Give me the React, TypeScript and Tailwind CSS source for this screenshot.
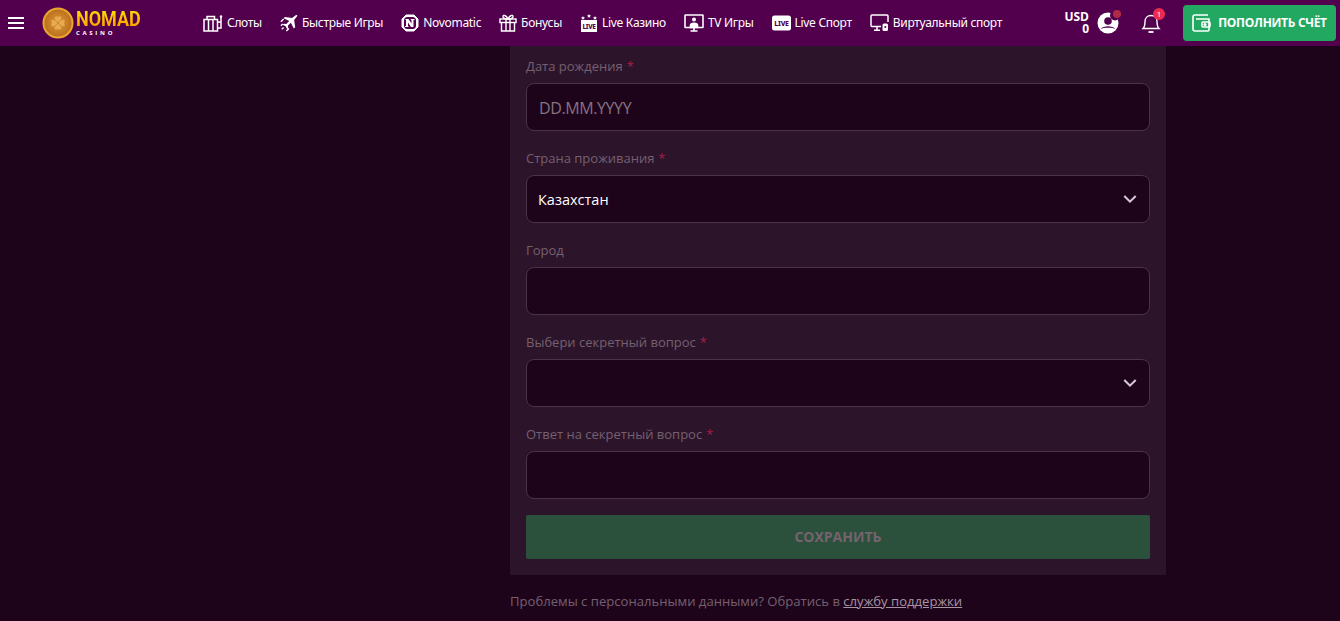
import { ReactNode } from "react";

function SlotsIcon() {
  return (
    <svg viewBox="0 0 20 18" className="h-[18px] w-5" fill="none" stroke="white" strokeWidth="1.5">
      <rect x="1" y="5.5" width="13.5" height="11.5" />
      <path d="M4 5.5V2.5h7.5v3M5.5 5.5V17M10 5.5V17M14.5 8H18v6h-3.5M18 8V3" />
      <circle cx="18" cy="2.5" r="1.2" fill="white" stroke="none" />
    </svg>
  );
}

function PlaneIcon() {
  return (
    <svg viewBox="0 0 20 20" className="h-[18px] w-[18px]" fill="white">
      <path d="M17.8 1.2c1-.6 1.8.2 1.2 1.2l-3.3 4.2 1.2 8-1.6 1.4-3.2-6.4-3.2 3.3.2 2.8-1.2 1.2-1.7-3.2-3.2-1.7 1.2-1.2 2.8.2 3.3-3.2L4 4.8l1.4-1.6 8 1.2z" />
      <path d="M1 8.5l3-3M1 13l2-2M7 19l3-3M2 17l2-2" stroke="white" strokeWidth="1.5" />
    </svg>
  );
}

function NovomaticIcon() {
  return (
    <svg viewBox="0 0 18 18" className="h-[18px] w-[18px]">
      <path d="M5 1h8l4 4v8l-4 4H5l-4-4V5z" fill="white" stroke="white" strokeLinejoin="round" strokeWidth="1" />
      <rect x="3" y="3" width="12" height="12" rx="3.5" fill="#52004e" />
      <path d="M4.5 5h3l3 4.500V6.500L9.500 5h4v1h-1v7H10L7 8.500V12l1 1H4v-1h1V6h-.5z" fill="white" />
    </svg>
  );
}

function GiftIcon() {
  return (
    <svg viewBox="0 0 18 18" className="h-[18px] w-[18px]" fill="none" stroke="white" strokeWidth="1.4">
      <rect x="1" y="5" width="16" height="3.5" />
      <path d="M2.500 8.500V17h13V8.500M7 5v12M11 5v12M9 5C7 1 4 .5 4 2.500S7 5 9 5c2 0 5-.5 5-2.500S11 1 9 5z" />
    </svg>
  );
}

function LiveCasinoIcon() {
  return (
    <svg viewBox="0 0 18 18" className="h-[18px] w-[18px]">
      <path d="M3 2l.6 1.300 1.400.1-1 1 .3 1.400L3 5.100l-1.300.7.3-1.400-1-1 1.400-.1zM9 0l.6 1.300 1.400.1-1 1 .3 1.400L9 3.100l-1.300.7.3-1.400-1-1 1.400-.1zM15 2l.6 1.300 1.400.1-1 1 .3 1.400-1.300-.7-1.300.7.3-1.400-1-1 1.400-.1z" fill="white" />
      <rect x="1" y="6" width="16" height="12" fill="white" />
      <text x="9" y="14.8" textAnchor="middle" fontSize="6.5" fontWeight="800" fill="#52004e">LIVE</text>
    </svg>
  );
}

function TvIcon() {
  return (
    <svg viewBox="0 0 20 18" className="h-[18px] w-5" fill="none" stroke="white" strokeWidth="1.6">
      <rect x="1" y="1" width="18" height="12.5" rx="0.5" />
      <circle cx="10" cy="5.5" r="2" fill="white" stroke="none" />
      <path d="M6.500 11.500c0-3 7-3 7 0v2h-7zM10 13.500V17M6.500 17h7" fill="white" />
    </svg>
  );
}

function LiveIcon() {
  return (
    <svg viewBox="0 0 19 16" className="h-4 w-[19px]">
      <rect x="0" y="0.5" width="19" height="15" rx="2.5" fill="white" />
      <text x="9.5" y="11" textAnchor="middle" fontSize="7" fontWeight="800" fill="#52004e">LIVE</text>
    </svg>
  );
}

function VirtualIcon() {
  return (
    <svg viewBox="0 0 19 18" className="h-[18px] w-[19px]" fill="none" stroke="white" strokeWidth="1.5">
      <path d="M11 12.500H2a1 1 0 0 1-1-1V2a1 1 0 0 1 1-1h15a1 1 0 0 1 1 1v6" />
      <path d="M7 12.500v3M4 16.200h6" />
      <rect x="12.5" y="9.5" width="5.5" height="7.5" rx="1.5" fill="white" stroke="none" />
      <circle cx="15.25" cy="13" r="1" fill="#52004e" stroke="none" />
    </svg>
  );
}

function Chevron() {
  return (
    <svg viewBox="0 0 16 10" className="absolute right-3 top-1/2 h-2.5 w-3.5 -translate-y-1/2" fill="none" stroke="#d8c8d6" strokeWidth="2.4">
      <path d="M1.500 1.500L8 8l6.500-6.500" />
    </svg>
  );
}

function NavItem({ icon, label }: { icon: ReactNode; label: string }) {
  return (
    <a className="flex items-center gap-1 whitespace-nowrap font-['Noto_Sans'] text-xs tracking-tight text-white">
      {icon}
      <span>{label}</span>
    </a>
  );
}

function Field({ label, required, children }: { label: string; required?: boolean; children?: ReactNode }) {
  return (
    <div className="flex flex-col gap-1">
      <div className="h-6 text-[13px] leading-[22px] text-[#75606f]">
        {label}
        {required && <span className="ml-1 text-[#a81f4b]">*</span>}
      </div>
      <div className="relative flex h-12 items-center rounded-lg border border-[#4d3049] bg-[#1e041b] px-3">{children}</div>
    </div>
  );
}

export default function App() {
  return (
    <div className="flex h-[621px] flex-col overflow-hidden bg-[#1e041b] font-['Open_Sans','Noto_Sans',sans-serif]">
      <header className="flex h-[46px] shrink-0 items-center bg-[#52004e] pr-1">
        <button className="ml-2 flex w-4 flex-col gap-[3px]">
          <span className="h-0.5 bg-white" />
          <span className="h-0.5 bg-white" />
          <span className="h-0.5 bg-white" />
        </button>
        <div className="ml-[18px] flex w-[105px] items-center gap-0.5">
          <svg viewBox="0 0 32 32" className="h-8 w-8 shrink-0">
            <defs>
              <radialGradient id="coin" cx="50%" cy="50%" r="55%">
                <stop offset="0%" stopColor="#dd9a35" />
                <stop offset="100%" stopColor="#b5691c" />
              </radialGradient>
            </defs>
            <circle cx="16" cy="16" r="14.5" fill="url(#coin)" stroke="#e9a72c" strokeWidth="2" />
            <path d="M16 16c-5-7-9-2-6 0-3 2 1 7 6 0 5 7 9 2 6 0 3-2-1-7-6 0zM16 16c-7-5-2-9 0-6 2-3 7 1 0 6 7 5 2 9 0 6-2 3-7-1 0-6z" fill="#e8ab52" stroke="#c97f26" strokeWidth="0.5" />
          </svg>
          <div className="flex flex-col">
            <span className="origin-left scale-x-90 bg-gradient-to-b from-yellow-300 to-amber-500 bg-clip-text font-['Roboto'] text-xl font-bold leading-5 text-transparent">NOMAD</span>
            <span className="text-[6px] font-bold uppercase leading-2 tracking-[0.45em] text-white">Casino</span>
          </div>
        </div>
        <nav className="ml-14 flex items-center gap-[18px]">
          <NavItem icon={<SlotsIcon />} label="Слоты" />
          <NavItem icon={<PlaneIcon />} label="Быстрые Игры" />
          <NavItem icon={<NovomaticIcon />} label="Novomatic" />
          <NavItem icon={<GiftIcon />} label="Бонусы" />
          <NavItem icon={<LiveCasinoIcon />} label="Live Казино" />
          <NavItem icon={<TvIcon />} label="TV Игры" />
          <NavItem icon={<LiveIcon />} label="Live Спорт" />
          <NavItem icon={<VirtualIcon />} label="Виртуальный спорт" />
        </nav>
        <div className="ml-auto flex items-center">
          <div className="text-right text-xs font-bold leading-3 text-white">
            USD
            <div>0</div>
          </div>
          <div className="relative ml-2">
            <svg viewBox="0 0 22 22" className="h-[22px] w-[22px]">
              <circle cx="11" cy="11" r="10.5" fill="white" />
              <circle cx="11" cy="9" r="3.8" fill="#52004e" />
              <path d="M3.500 17c3-3.800 12-3.800 15 0-3-1.600-12-1.600-15 0z" fill="#52004e" />
              <circle cx="18" cy="3.5" r="5" fill="#52004e" />
            </svg>
            <span className="absolute -right-0.5 -top-0.5 h-2 w-2 rounded-full bg-[#b02a45]" />
          </div>
          <div className="relative ml-5.5">
            <svg viewBox="0 0 20 22" className="h-[22px] w-5" fill="none" stroke="white" strokeWidth="1.4">
              <path d="M2 16.500c2-2 2-4 2-7 0-3.500 2.500-6 6-6s6 2.500 6 6c0 3 0 5 2 7z" />
              <path d="M7.500 20h5" strokeWidth="1.8" />
            </svg>
            <span className="absolute -right-1 -top-1 flex h-3 w-3 items-center justify-center rounded-full bg-[#ed2a4f] text-[8px] leading-none text-white">1</span>
          </div>
          <button className="ml-5.5 flex h-9 w-[153px] items-center justify-center gap-1.5 rounded-sm bg-[#22a861] text-xs font-bold tracking-tight text-white">
            <svg viewBox="0 0 20 18" className="h-[18px] w-5" fill="none" stroke="white" strokeWidth="1.6">
              <path d="M16 1H3a2 2 0 0 0-2 2v12a2 2 0 0 0 2 2h13a1 1 0 0 0 1-1V5H4" />
              <rect x="10" y="8" width="8" height="5" rx="1" />
              <circle cx="13" cy="10.5" r="0.8" fill="white" />
            </svg>
            ПОПОЛНИТЬ СЧЁТ
          </button>
        </div>
      </header>
      <main className="ml-[510px] w-[656px]">
        <div className="flex flex-col gap-4 bg-[#2c142a] px-4 pb-4 pt-[9px]">
          <Field label="Дата рождения" required>
            <span className="pt-px text-base tracking-tight text-[#857380]">DD.MM.YYYY</span>
          </Field>
          <Field label="Страна проживания" required>
            <span className="-ml-px pt-0.5 text-[14.5px] text-white">Казахстан</span>
            <Chevron />
          </Field>
          <Field label="Город" />
          <Field label="Выбери секретный вопрос" required>
            <Chevron />
          </Field>
          <Field label="Ответ на секретный вопрос" required />
          <button className="h-11 rounded-xs bg-[#2b513c] text-sm font-bold text-[#75636f]">СОХРАНИТЬ</button>
        </div>
        <p className="mt-4 pt-px text-[13.1px] text-[#75606f]">
          Проблемы с персональными данными? Обратись в <a className="text-[#a794a4] underline">службу поддержки</a>
        </p>
      </main>
    </div>
  );
}
